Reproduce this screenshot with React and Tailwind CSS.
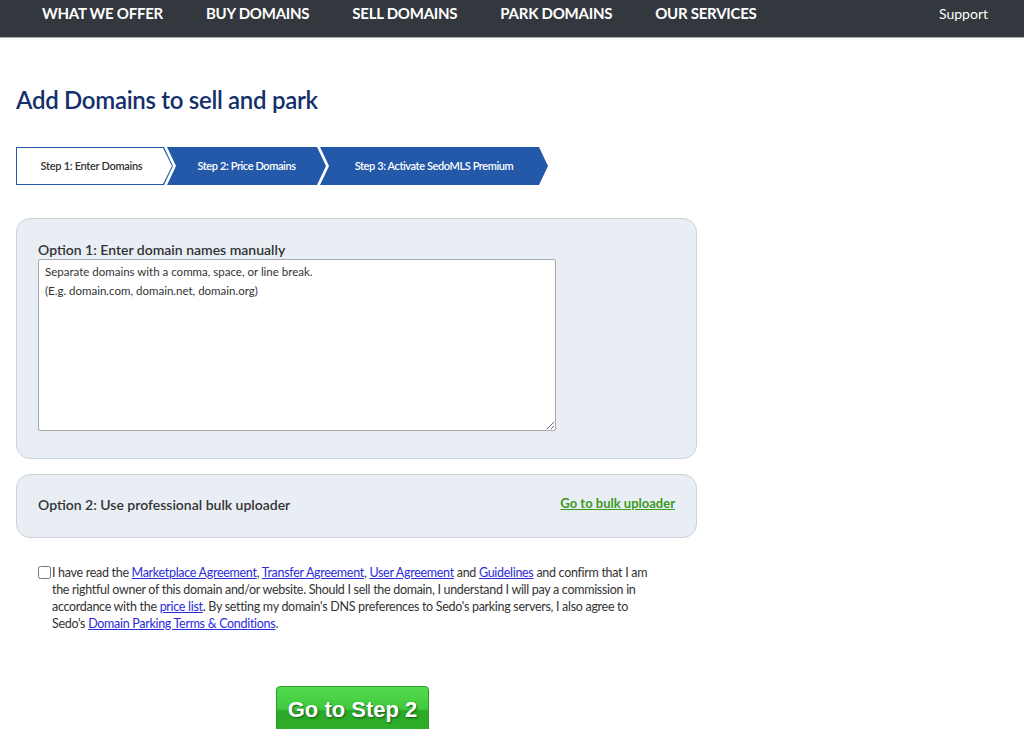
import React from "react";

const font = { fontFamily: "Lato, 'Noto Sans', sans-serif" };

function Step({ label, first, active, width }) {
  const shape = first
    ? "[clip-path:polygon(0_0,calc(100%-9px)_0,100%_50%,calc(100%-9px)_100%,0_100%)]"
    : "[clip-path:polygon(0_0,calc(100%-9px)_0,100%_50%,calc(100%-9px)_100%,0_100%,9px_50%)]";
  if (active) {
    return (
      <div
        className={`h-[38px] bg-[#2459a9] p-[1px] ${shape}`}
        style={{ width }}
      >
        <div
          className={`h-full w-full bg-white flex items-center justify-center pr-[6px] text-[11px] font-semibold text-[#333] tracking-[-0.3px] [clip-path:polygon(0_0,calc(100%-9px)_0,100%_50%,calc(100%-9px)_100%,0_100%)]`}
        >
          {label}
        </div>
      </div>
    );
  }
  return (
    <div
      className={`h-[38px] -ml-[6px] bg-[#2459a9] flex items-center justify-center text-[11px] font-semibold text-white tracking-[-0.4px] ${shape}`}
      style={{ width }}
    >
      {label}
    </div>
  );
}

export default function App() {
  return (
    <div className="min-h-[729px] bg-white text-[#333]" style={font}>
      <header className="h-[38px] bg-[#33373e] border-b border-[#a9abae] flex items-start">
        <nav className="flex gap-[43px] pl-[42px] pt-[2px] text-[15px] font-bold text-white tracking-[-0.25px]">
          <span>WHAT WE OFFER</span>
          <span>BUY DOMAINS</span>
          <span>SELL DOMAINS</span>
          <span>PARK DOMAINS</span>
          <span>OUR SERVICES</span>
        </nav>
        <span className="ml-auto mr-[36px] pt-[3px] text-[14px] text-white">Support</span>
      </header>

      <main className="pl-[16px] w-[697px]">
        <h1 className="mt-[47px] text-[24px] font-semibold text-[#13306a] tracking-[-0.3px] leading-[30px]">
          Add Domains to sell and park
        </h1>

        <div className="mt-[32px] flex">
          <Step label="Step 1: Enter Domains" first active width="157px" />
          <Step label="Step 2: Price Domains" width="159px" />
          <Step label="Step 3: Activate SedoMLS Premium" width="228px" />
        </div>

        <section className="mt-[33px] rounded-[14px] border border-[#cdd2da] bg-[#e9eef5] px-[21px] pt-[22px] pb-[27px]">
          <div className="text-[14px] font-semibold text-[#333] leading-[18px]">
            Option 1: Enter domain names manually
          </div>
          <textarea
            className="block w-[518px] h-[172px] bg-white border border-[#a9a9a9] rounded-[2px] px-[6px] py-[2px] text-[11.5px] leading-[19px] text-[#333] placeholder:text-[#333] outline-none"
            placeholder={"Separate domains with a comma, space, or line break.\n(E.g. domain.com, domain.net, domain.org)"}
          />
        </section>

        <section className="mt-[15px] h-[64px] rounded-[14px] border border-[#cdd2da] bg-[#e9eef5] px-[21px] pb-[4px] flex items-center justify-between">
          <span className="text-[14px] font-semibold text-[#333]">Option 2: Use professional bulk uploader</span>
          <a href="#" className="text-[13px] font-bold text-[#3a9b22] underline">Go to bulk uploader</a>
        </section>

        <div className="mt-[26px] pl-[22px] flex items-start">
          <input type="checkbox" className="mt-[2px] w-[13px] h-[13px] shrink-0" />
          <p className="ml-[1px] w-[606px] text-[12.5px] leading-[17px] text-[#333] tracking-[-0.3px]">
            I have read the <a href="#" className="text-[#2b2bd9] underline">Marketplace Agreement</a>,{" "}
            <a href="#" className="text-[#2b2bd9] underline">Transfer Agreement</a>,{" "}
            <a href="#" className="text-[#2b2bd9] underline">User Agreement</a> and{" "}
            <a href="#" className="text-[#2b2bd9] underline">Guidelines</a> and confirm that I am the rightful owner of this domain and/or website. Should I sell the domain, I understand I will pay a commission in accordance with the{" "}
            <a href="#" className="text-[#2b2bd9] underline">price list</a>. By setting my domain's DNS preferences to Sedo's parking servers, I also agree to Sedo's{" "}
            <a href="#" className="text-[#2b2bd9] underline">Domain Parking Terms &amp; Conditions</a>.
          </p>
        </div>

        <div className="mt-[54px] pl-[260px]">
          <button
            className="w-[153px] h-[46px] rounded-t-[4px] border border-[#2c9a28] bg-[linear-gradient(to_bottom,#52db4f_0%,#40c93c_50%,#2aa726_55%,#2fae2b_100%)] text-white text-[22px] font-bold [text-shadow:1px_1px_2px_#1a5a17] flex items-start justify-center pt-[6px]"
            style={{ fontFamily: "'Liberation Sans', Arial, sans-serif" }}
          >
            Go to Step 2
          </button>
        </div>
      </main>
    </div>
  );
}
